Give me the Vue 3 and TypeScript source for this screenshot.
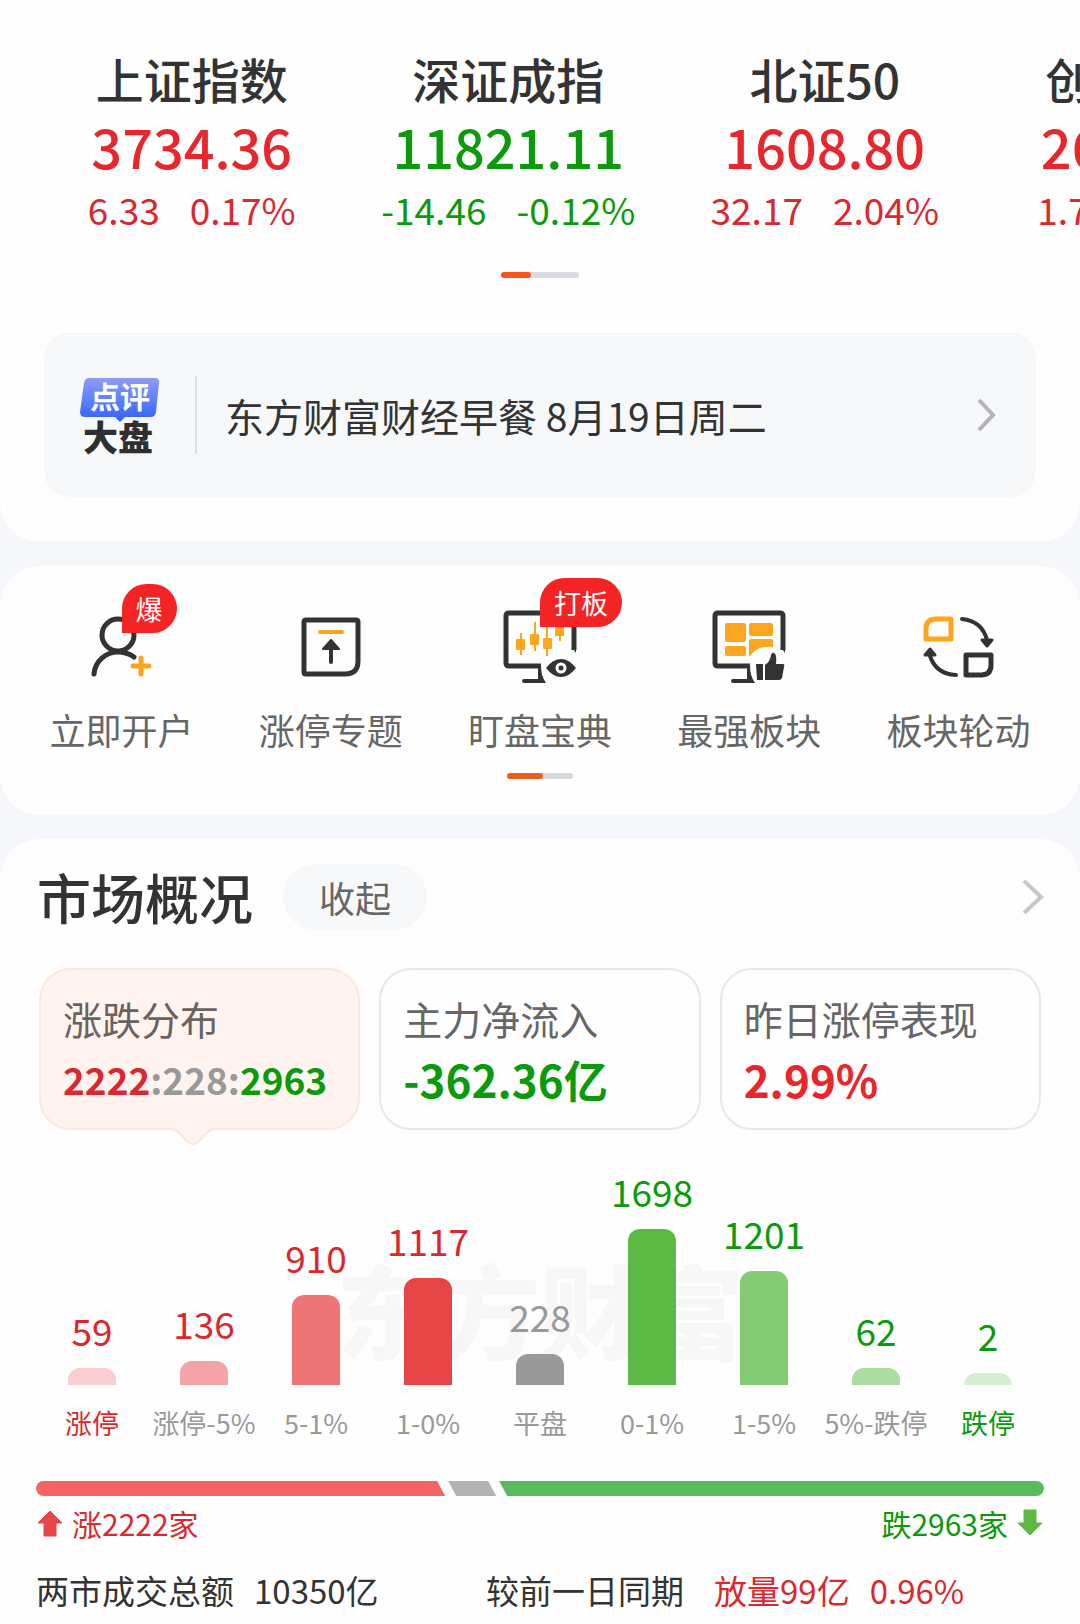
<script setup lang="ts">
type Tone = 'up' | 'down' | 'flat'

interface IndexQuote {
  name: string
  value: string
  change: string
  percent: string
  tone: Tone
}

interface Bucket {
  label: string
  count: number
  height: number
  color: string
  tone: Tone
  limit?: boolean
}

const quotes: IndexQuote[] = [
  { name: '上证指数', value: '3734.36', change: '6.33', percent: '0.17%', tone: 'up' },
  { name: '深证成指', value: '11821.11', change: '-14.46', percent: '-0.12%', tone: 'down' },
  { name: '北证50', value: '1608.80', change: '32.17', percent: '2.04%', tone: 'up' },
  { name: '创业板指', value: '2607.74', change: '1.75', percent: '0.07%', tone: 'up' },
]

const buckets: Bucket[] = [
  { label: '涨停', count: 59, height: 17, color: '#fbcfd1', tone: 'up', limit: true },
  { label: '涨停-5%', count: 136, height: 24, color: '#f4a4a6', tone: 'up' },
  { label: '5-1%', count: 910, height: 90, color: '#ee7576', tone: 'up' },
  { label: '1-0%', count: 1117, height: 107, color: '#e84646', tone: 'up' },
  { label: '平盘', count: 228, height: 31, color: '#999999', tone: 'flat' },
  { label: '0-1%', count: 1698, height: 156, color: '#5cb944', tone: 'down' },
  { label: '1-5%', count: 1201, height: 114, color: '#83cc74', tone: 'down' },
  { label: '5%-跌停', count: 62, height: 17, color: '#acdda1', tone: 'down' },
  { label: '跌停', count: 2, height: 12, color: '#d6efd1', tone: 'down', limit: true },
]
</script>

<template>
  <main class="page">
    <section class="panel top">
      <ul class="quotes">
        <li v-for="q in quotes" :key="q.name" class="quote" :class="q.tone">
          <span class="quote-name">{{ q.name }}</span>
          <span class="quote-value">{{ q.value }}</span>
          <span class="quote-change"><span>{{ q.change }}</span><span>{{ q.percent }}</span></span>
        </li>
      </ul>
      <div class="pager wide"><i></i></div>
      <a class="banner" href="#">
        <svg class="logo" width="80" height="80" viewBox="0 0 80 80">
          <defs>
            <linearGradient id="bubble" x1="0" y1="0" x2="0" y2="1">
              <stop offset="0" stop-color="#8f9cf8" />
              <stop offset="1" stop-color="#2f62fb" />
            </linearGradient>
          </defs>
          <path d="M9 3H75Q80 3 79 8L76 37Q75 42 71 42H45L40 47L35 42H5Q0 42 0 37L4 8Q5 3 9 3Z" fill="url(#bubble)" />
          <text x="40" y="33" text-anchor="middle" class="logo-top">点评</text>
          <text x="38" y="76" text-anchor="middle" class="logo-bottom">大盘</text>
        </svg>
        <span class="rule"></span>
        <span class="banner-text">东方财富财经早餐 8月19日周二</span>
        <svg class="chevron" width="20" height="36" viewBox="0 0 20 36"><path d="M3 3L17 18L3 33" fill="none" stroke="#b3b4b6" stroke-width="4" /></svg>
      </a>
    </section>

    <section class="panel tools-panel">
      <nav class="tools">
        <a class="tool" href="#">
          <span class="icon">
            <svg width="84" height="84" viewBox="0 0 84 84" fill="none" stroke="#333" stroke-width="5" stroke-linecap="round">
              <circle cx="38" cy="29" r="16" />
              <path d="M14 68C15 55 26 46 38 46Q47 46 54 51" />
              <path d="M61 52V68M53 60H69" stroke="#fca61f" />
            </svg>
            <b class="badge single">爆</b>
          </span>
          <span>立即开户</span>
        </a>
        <a class="tool" href="#">
          <span class="icon">
            <svg width="84" height="84" viewBox="0 0 84 84" fill="none" stroke="#333" stroke-width="5" stroke-linecap="round" stroke-linejoin="round">
              <path d="M17 14H67Q69 14 69 16V55Q69 68 56 68H17Q15 68 15 66V16Q15 14 17 14Z" />
              <path d="M31 26H53" stroke="#fca61f" stroke-width="4" />
              <path d="M42 40V56" stroke-width="4" />
              <path d="M42 34L34 43H50Z" fill="#333" stroke-width="2" />
            </svg>
          </span>
          <span>涨停专题</span>
        </a>
        <a class="tool" href="#">
          <span class="icon">
            <svg width="84" height="84" viewBox="0 0 84 84">
              <path d="M76 44V10Q76 7 73 7H11Q8 7 8 10V57Q8 60 11 60H43" fill="none" stroke="#333" stroke-width="5" />
              <path d="M73 42Q76 43 78 47V42H73ZM40 60H43Q43 70 48 77H26A2 2 0 0 1 26 73H40Z" fill="#333" />
              <g fill="#fca61f">
                <rect x="18" y="33" width="9" height="11" rx="1" /><rect x="22" y="27" width="2" height="22" />
                <rect x="32" y="28" width="9" height="11" rx="1" /><rect x="36" y="16" width="2" height="29" />
                <rect x="45" y="32" width="9" height="11" rx="1" /><rect x="48" y="17" width="2" height="33" />
                <rect x="57" y="18" width="9" height="12" rx="1" /><rect x="61" y="12" width="2" height="23" />
              </g>
              <path d="M48 62Q55 53 63 53T78 62Q71 71 63 71T48 62Z" fill="#333" />
              <circle cx="63" cy="62" r="4" fill="#333" stroke="#fff" stroke-width="3" />
            </svg>
            <b class="badge">打板</b>
          </span>
          <span>盯盘宝典</span>
        </a>
        <a class="tool" href="#">
          <span class="icon">
            <svg width="84" height="84" viewBox="0 0 84 84">
              <path d="M76 44V10Q76 7 73 7H11Q8 7 8 10V57Q8 60 11 60H43" fill="none" stroke="#333" stroke-width="5" />
              <path d="M73 42Q76 43 78 47V42H73ZM40 60H43Q43 70 48 77H26A2 2 0 0 1 26 73H40Z" fill="#333" />
              <g fill="#fca61f">
                <rect x="18" y="17" width="21" height="19" rx="2" />
                <rect x="42" y="17" width="24" height="13" rx="2" />
                <rect x="18" y="40" width="21" height="10" rx="2" />
                <path d="M44 33H64Q66 33 66 35V41Q51 39 43 50H42V35Q42 33 44 33Z" />
              </g>
              <path d="M49 58H56V74H50ZM58 74V59Q63 56 64 49Q65 46 67 47Q70 48 69 58H76Q78 58 77 61L75 72Q74 74 72 74Z" fill="#333" />
            </svg>
          </span>
          <span>最强板块</span>
        </a>
        <a class="tool" href="#">
          <span class="icon">
            <svg width="84" height="84" viewBox="0 0 84 84" fill="none" stroke="#333" stroke-width="5" stroke-linecap="round" stroke-linejoin="round">
              <path d="M20 13H35V33H10V23Q10 13 20 13Z" stroke="#fca61f" />
              <path d="M50 49H75V59Q75 69 65 69H50Z" />
              <path d="M46 13Q66 15 71 34M40 69Q20 68 14 50" stroke-width="4" />
              <path d="M66 34H76L71 40ZM9 49H19L14 43Z" fill="#333" stroke-width="3" />
            </svg>
          </span>
          <span>板块轮动</span>
        </a>
      </nav>
      <div class="pager"><i></i></div>
    </section>

    <section class="panel market">
      <header class="market-head">
        <h2>市场概况</h2>
        <button type="button" class="fold">收起</button>
        <a class="more" href="#" aria-label="更多">
          <svg width="24" height="38" viewBox="0 0 24 38"><path d="M4 3L21 19L4 35" fill="none" stroke="#c8c8c8" stroke-width="4" /></svg>
        </a>
      </header>

      <div class="cards">
        <button type="button" class="card active">
          <span class="card-label">涨跌分布</span>
          <span class="card-value ratio"><span class="up">2222</span><span class="flat">:228:</span><span class="down">2963</span></span>
          <svg class="pointer" width="44" height="18" viewBox="0 0 44 18"><path d="M0 2Q4 2 7 5L17 14Q22 18 27 14L37 5Q40 2 44 2V0H0Z" fill="#fff4ef" /><path d="M0 1Q4 1 7 4L17 14Q22 18 27 14L37 4Q40 1 44 1" fill="none" stroke="#fde7df" stroke-width="2" /></svg>
        </button>
        <button type="button" class="card">
          <span class="card-label">主力净流入</span>
          <span class="card-value down">-362.36亿</span>
        </button>
        <button type="button" class="card">
          <span class="card-label">昨日涨停表现</span>
          <span class="card-value up">2.99%</span>
        </button>
      </div>

      <div class="chart">
        <span class="watermark" aria-hidden="true">东方财富</span>
        <div v-for="b in buckets" :key="b.label" class="bucket" :class="[b.tone, { limit: b.limit }]">
          <span class="count">{{ b.count }}</span>
          <span class="bar" :style="{ height: b.height + 'px', background: b.color }"></span>
          <span class="bucket-label">{{ b.label }}</span>
        </div>
      </div>

      <div class="split">
        <span class="seg seg-up"></span>
        <span class="seg seg-flat"></span>
        <span class="seg seg-down"></span>
      </div>
      <div class="totals">
        <span class="total up">
          <svg width="28" height="28" viewBox="0 0 28 28"><path d="M14 2L26 14H20V27H8V14H2Z" fill="#e84646" stroke="#e84646" stroke-linejoin="round" /></svg>
          涨2222家
        </span>
        <span class="total down">
          跌2963家
          <svg width="28" height="28" viewBox="0 0 28 28"><path d="M14 26L26 14H20V1H8V14H2Z" fill="#5cb944" stroke="#5cb944" stroke-linejoin="round" /></svg>
        </span>
      </div>
      <div class="turnover">
        <span class="turnover-item"><span>两市成交总额</span><span>10350亿</span></span>
        <span class="turnover-item compare"><span>较前一日同期</span><span class="delta up"><span>放量99亿</span><span>0.96%</span></span></span>
      </div>
    </section>
  </main>
</template>

<style>
body {
  margin: 0;
  background: #f6f7fa;
}
</style>

<style scoped>
* {
  box-sizing: border-box;
}

.page {
  display: flex;
  flex-direction: column;
  gap: 24px;
  overflow: hidden;
  color: #333;
  font-family: "Noto Sans CJK SC", "Noto Sans", sans-serif;
}

a {
  color: inherit;
  text-decoration: none;
}

button {
  border: 0;
  font: inherit;
  color: inherit;
  cursor: pointer;
}

svg {
  display: block;
  flex: none;
}

.panel {
  background: #fefefe;
  border-radius: 40px;
}

.up {
  color: #d9292e;
}

.down {
  color: #0a9a0c;
}

.flat {
  color: #999;
}

/* Index quotes and news banner */
.top {
  padding: 48px 0 45px;
  border-radius: 0 0 40px 40px;
}

.quotes {
  display: flex;
  gap: 3px;
  margin: 0;
  padding: 0 0 0 35px;
  list-style: none;
}

.quote {
  flex: 0 0 30%;
  display: flex;
  flex-direction: column;
  align-items: center;
  gap: 6px;
  white-space: nowrap;
}

.quote-name {
  color: #333;
  font-size: 48px;
  font-weight: 500;
  line-height: 60px;
}

.quote-value {
  font-size: 54px;
  font-weight: 500;
  line-height: 64px;
}

.quote.up .quote-value {
  color: #e8262b;
}

.quote-change {
  display: flex;
  gap: 30px;
  font-size: 37px;
  line-height: 50px;
}

.pager {
  width: 66px;
  height: 6px;
  margin: 0 auto;
  border-radius: 3px;
  background: #d8d8d8;
}

.pager i {
  display: block;
  width: 36px;
  height: 6px;
  border-radius: 3px;
  background: #ec5e1c;
}

.pager.wide {
  width: 78px;
  margin: 38px auto 54px;
  background: #d9dbe0;
}

.pager.wide i {
  width: 30px;
  background: #f8531e;
}

.banner {
  display: flex;
  align-items: center;
  height: 165px;
  margin: 0 44px;
  padding: 0 40px 0 36px;
  border-radius: 26px;
  background: #f7f8fa;
}

.logo-top {
  fill: #fff;
  font-size: 30px;
  font-weight: 700;
}

.logo-bottom {
  fill: #2f2f2f;
  font-size: 35px;
  font-weight: 900;
}

.rule {
  width: 2px;
  height: 78px;
  margin: 0 28px 0 35px;
  background: #dedfe2;
}

.banner-text {
  flex: 1;
  font-size: 39px;
  line-height: 58px;
}

/* Shortcut icons */
.tools-panel {
  padding: 40px 17px 36px;
}

.tools {
  display: grid;
  grid-template-columns: repeat(5, 1fr);
  margin-bottom: 18px;
}

.tool {
  display: flex;
  flex-direction: column;
  align-items: center;
  gap: 13px;
  color: #666;
  font-size: 36px;
  line-height: 52px;
  white-space: nowrap;
}

.icon {
  position: relative;
}

.badge {
  position: absolute;
  left: 42px;
  top: -28px;
  width: 82px;
  height: 49px;
  border-radius: 25px 25px 25px 0;
  background: #f52424;
  color: #fff;
  font-size: 27px;
  font-weight: 400;
  line-height: 49px;
  text-align: center;
}

.badge.single {
  top: -22px;
  width: 55px;
}

/* Market overview */
.market {
  padding: 25px 36px 10px;
  border-radius: 40px 40px 0 0;
}

.market-head {
  display: flex;
  align-items: center;
  height: 66px;
}

h2 {
  margin: 0 30px 0 1px;
  font-size: 54px;
  font-weight: 500;
  line-height: 66px;
}

.fold {
  height: 66px;
  padding: 0 36px;
  border-radius: 33px;
  background: #f7f8fa;
  color: #666;
  font-size: 36px;
  line-height: 64px;
}

.more {
  margin-left: auto;
}

.cards {
  display: grid;
  grid-template-columns: repeat(3, 1fr);
  gap: 19px;
  margin: 38px 3px 0;
}

.card {
  position: relative;
  display: flex;
  flex-direction: column;
  align-items: flex-start;
  gap: 7px;
  height: 162px;
  padding: 22px 0 0 22px;
  border: 2px solid #e8e8e8;
  border-radius: 32px;
  background: #fefefe;
  white-space: nowrap;
}

.card.active {
  border-color: #fde7df;
  background: #fff4ef;
}

.card-label {
  color: #666;
  font-size: 39px;
  line-height: 52px;
}

.active .card-label {
  color: #6b625f;
}

.card-value {
  font-size: 44px;
  font-weight: 700;
  line-height: 56px;
}

.card-value.up {
  color: #e8262b;
}

.card-value.ratio {
  font-size: 37px;
}

.pointer {
  position: absolute;
  left: 130px;
  top: 158px;
}

/* Distribution chart */
.chart {
  position: relative;
  display: grid;
  grid-template-columns: repeat(9, 1fr);
  align-items: end;
  margin-top: 39px;
}

.watermark {
  position: absolute;
  left: 0;
  right: 0;
  top: 69px;
  color: #f7f7f7;
  font-size: 102px;
  font-weight: 900;
  line-height: 140px;
  text-align: center;
}

.bucket {
  position: relative;
  display: flex;
  flex-direction: column;
  align-items: center;
  white-space: nowrap;
}

.count {
  margin-bottom: 16px;
  font-size: 37px;
  line-height: 44px;
}

.bar {
  width: 48px;
  border-radius: 12px 12px 0 0;
}

.bucket-label {
  margin-top: 18px;
  color: #999;
  font-size: 27px;
  line-height: 40px;
}

.limit .bucket-label {
  color: inherit;
}

/* Advance / decline split */
.split {
  display: flex;
  height: 15px;
  margin-top: 38px;
  border-radius: 8px;
  overflow: hidden;
}

.seg {
  margin-right: -5px;
}

.seg-up {
  flex: 410;
  background: #f56364;
  clip-path: polygon(0 0, calc(100% - 8px) 0, 100% 100%, 0 100%);
}

.seg-flat {
  flex: 0 0 48px;
  margin-left: 8px;
  background: #b3b3b3;
  clip-path: polygon(0 0, calc(100% - 8px) 0, 100% 100%, 8px 100%);
}

.seg-down {
  flex: 546;
  margin-left: 8px;
  margin-right: 0;
  background: #5bbb5c;
  clip-path: polygon(0 0, 100% 0, 100% 100%, 8px 100%);
}

.totals {
  display: flex;
  justify-content: space-between;
  margin-top: 5px;
}

.total {
  display: flex;
  align-items: center;
  gap: 8px;
  font-size: 30px;
  line-height: 44px;
}

.turnover {
  display: flex;
  margin-top: 21px;
  font-size: 33px;
  line-height: 48px;
  white-space: nowrap;
}

.turnover-item {
  display: flex;
  gap: 20px;
  flex: 450;
}

.compare {
  flex: 558;
  gap: 30px;
}

.delta {
  display: flex;
  gap: 20px;
}
</style>
